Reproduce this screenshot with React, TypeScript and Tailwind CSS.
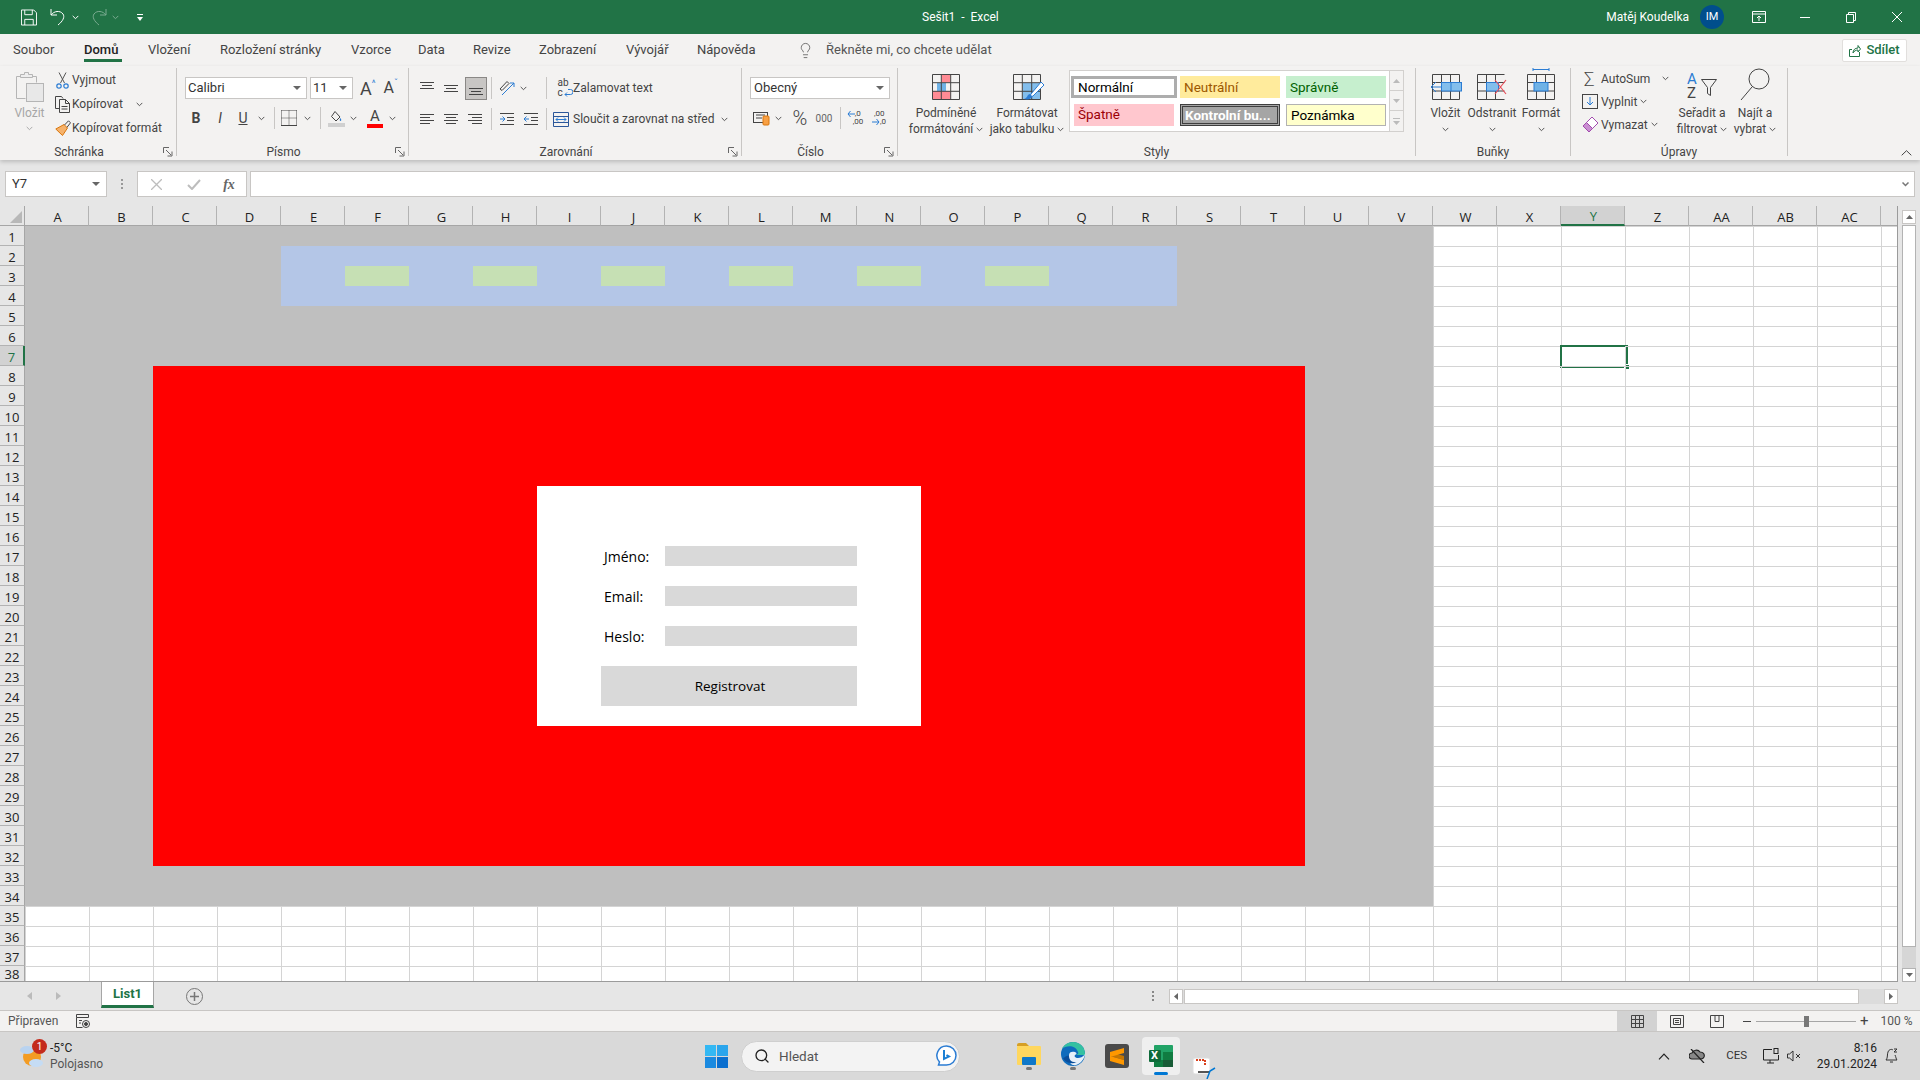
import type { ReactNode } from "react";
import { Search, Lightbulb } from "lucide-react";
import clsx from "clsx";

// --- malé pomocné prvky ---
const Box = ({ className, children }: { className?: string; children?: ReactNode }) => (
  <div className={clsx("flex h-full shrink-0 items-center justify-center", className)}>{children}</div>
);

const Chev = ({ className = "text-[#555]" }: { className?: string }) => (
  <svg width="7" height="5" viewBox="0 0 7 5" className={className} fill="none" stroke="currentColor">
    <path d="M.7.9 3.500 3.700 6.300.9" />
  </svg>
);

const Caret = () => (
  <svg width="8" height="4" viewBox="0 0 8 4" className="text-[#666]" fill="currentColor">
    <path d="M0 0h8L4 4z" />
  </svg>
);

const Sep = () => <div className="h-[22px] w-px bg-[#c8c6c4]" />;

const Launcher = ({ className }: { className: string }) => (
  <svg width="10" height="10" viewBox="0 0 10 10" className={clsx("absolute", className)} fill="none" stroke="#666">
    <path d="M.5 6V.5H6M3 3l5 5M9 4.500v4.500H4.500" />
  </svg>
);

const Grp = ({ label, className, launcher, children }: { label: string; className: string; launcher?: string; children: ReactNode }) => (
  <div className={clsx("relative mt-[2px] flex h-[88px] shrink-0 flex-col border-r border-[#c8c6c4]", className)}>
    <div className="flex h-[76px] shrink-0">{children}</div>
    <div className={clsx("h-[16px] shrink-0 text-center text-[12px] leading-[16px] text-[#444]", launcher && "pr-[18px]")}>{label}</div>
    {launcher && <Launcher className={launcher} />}
  </div>
);

const BigBtn = ({ className, icon, l1, l2 }: { className: string; icon: ReactNode; l1: string; l2?: string }) => (
  <div className={clsx("flex shrink-0 flex-col items-center text-[12px] leading-[16px] text-[#444]", className)}>
    <div className="flex h-[37px] items-center">{icon}</div>
    <div>{l1}</div>
    <div className="flex h-[16px] items-center gap-[3px]">
      {l2 && <span>{l2}</span>}
      <Chev />
    </div>
  </div>
);

// --- ikony ribbonu ---
const PasteIcon = () => (
  <svg width="29" height="30" viewBox="0 0 29 30" fill="none" stroke="#b5b5b5">
    <path d="M5.500 4.500H1.500v22h9M17.500 4.500h4v6" />
    <path d="M5.500 5.500V2.500h4V.5h4v2h4v3z" fill="#eee" />
    <rect x="11.500" y="11.500" width="17" height="18" fill="#e8e8e8" />
  </svg>
);
const ScissorsIcon = () => (
  <svg width="13" height="17" viewBox="0 0 13 17" fill="none">
    <path d="M3 .5 8.500 11M10 .5 4.500 11" stroke="#555" />
    <circle cx="3" cy="14" r="2.200" stroke="#2b7cd3" strokeWidth="1.200" />
    <circle cx="10" cy="14" r="2.200" stroke="#2b7cd3" strokeWidth="1.200" />
  </svg>
);
const CopyIcon = () => (
  <svg width="16" height="17" viewBox="0 0 16 17" fill="none" stroke="#444">
    <path d="M4.500 12.500h-4V.5h6l1.500 2M4.500 3.500h6l4 4v9h-10zM10.500 3.500v4h4M6.500 10.500h6M6.500 13h6" />
  </svg>
);
const BrushIcon = () => (
  <svg width="16" height="17" viewBox="0 0 16 17" fill="none">
    <path d="M9 4.500 12.500 8 7.500 15.500.8 9z" fill="#f6b26b" stroke="#d9760c" />
    <path d="M9.500 5 13.500.8l2 2-3.500 4.500" stroke="#444" />
  </svg>
);
const AlignIcon = ({ v }: { v: "top" | "mid" | "bot" | "l" | "c" | "r" | "in" | "out" }) => {
  const y = v === "top" ? [2, 5, 8] : v === "mid" ? [5, 8, 11] : v === "bot" ? [8, 11, 14] : [];
  if (y.length) {
    return (
      <svg width="16" height="16" viewBox="0 0 16 16" stroke="#444" fill="none">
        <path d={`M1 ${y[0]}.5h14`} />
        <path d={`M3 ${y[1]}.5h10`} />
        <path d={`M1 ${y[2]}.5h14`} />
      </svg>
    );
  }
  if (v === "in" || v === "out") {
    return (
      <svg width="16" height="16" viewBox="0 0 16 16" fill="none">
        <path d="M1 2.500h14M1 13.500h14M8 6.500h7M8 9.500h7" stroke="#444" />
        <path d={v === "in" ? "M6 8H1M3.500 5.500 1 8l2.500 2.500" : "M1 8h5M3.500 5.500 6 8l-2.500 2.500"} stroke="#2b7cd3" />
      </svg>
    );
  }
  const d = v === "l" ? ["M1 3.500h14", "M1 6.500h10", "M1 9.500h14", "M1 12.500h10"] : v === "c" ? ["M1 3.500h14", "M3 6.500h10", "M1 9.500h14", "M3 12.500h10"] : ["M1 3.500h14", "M5 6.500h10", "M1 9.500h14", "M5 12.500h10"];
  return (
    <svg width="16" height="16" viewBox="0 0 16 16" stroke="#444" fill="none">
      {d.map((p) => (
        <path key={p} d={p} />
      ))}
    </svg>
  );
};
const TableBase = ({ children }: { children?: ReactNode }) => (
  <svg width="34" height="28" viewBox="-3 -1 34 28" fill="none" stroke="#444">
    {children}
  </svg>
);

const Ribbon = () => (
  <div className="relative z-10 flex h-[94px] bg-[#f3f2f1] shadow-[0_2px_4px_rgba(0,0,0,0.18)]">
    <Grp label="Schránka" className="w-[177px]" launcher="right-[3px] bottom-[-1px]">
      <div className="ml-[14px] flex w-[31px] flex-col items-center pt-[4px] text-[12px] leading-[16px] text-[#a6a6a6]">
        <PasteIcon />
        <div className="mt-[3px]">Vložit</div>
        <div className="mt-[5px]"><Chev className="text-[#aaa]" /></div>
      </div>
      <div className="ml-[8px] flex flex-col text-[12px] text-[#444]">
        <div className="flex h-[24px] items-center">
          <Box className="w-[19px]"><ScissorsIcon /></Box>
          Vyjmout
        </div>
        <div className="flex h-[24px] items-center">
          <Box className="w-[19px]"><CopyIcon /></Box>
          Kopírovat
          <span className="ml-[13px]"><Chev /></span>
        </div>
        <div className="flex h-[24px] items-center">
          <Box className="w-[19px]"><BrushIcon /></Box>
          Kopírovat formát
        </div>
      </div>
    </Grp>

    <Grp label="Písmo" className="w-[232px]" launcher="right-[3px] bottom-[-1px]">
      <div className="ml-[8px] flex flex-col pt-[9px]">
        <div className="flex h-[22px] items-center text-[13px] text-[#333]">
          <div className="flex h-full w-[122px] items-center justify-between border border-[#c8c6c4] bg-white pr-[5px] pl-[2px]">Calibri<Caret /></div>
          <div className="ml-[3px] flex h-full w-[43px] items-center justify-between border border-[#c8c6c4] bg-white pr-[5px] pl-[2px]">11<Caret /></div>
          <span className="ml-[7px] text-[18px] text-[#444]">A</span><span className="mb-[8px] text-[9px] text-[#2b7cd3]">^</span>
          <span className="ml-[8px] text-[16px] text-[#444]">A</span><span className="mb-[8px] text-[9px] text-[#2b7cd3]">ˇ</span>
        </div>
        <div className="mt-[9px] flex h-[20px] items-center text-[#444]">
          <Box className="w-[22px] text-[14px] font-bold">B</Box>
          <Box className="w-[26px] text-[14px] italic">I</Box>
          <Box className="w-[20px] text-[14px] underline">U</Box>
          <Box className="w-[16px]"><Chev /></Box>
          <Box className="w-[10px]"><Sep /></Box>
          <Box className="w-[20px]">
            <svg width="16" height="16" viewBox="0 0 16 16" fill="none" stroke="#444">
              <path d="M.5.5h15M.5 8h15M8 .5v15M.5.5v15M15.500.5v15" strokeDasharray="1 1" />
              <path d="M0 15.500h16" />
            </svg>
          </Box>
          <Box className="w-[16px]"><Chev /></Box>
          <Box className="w-[10px]"><Sep /></Box>
          <Box className="w-[22px]">
            <svg width="17" height="17" viewBox="0 0 17 17" fill="none">
              <path d="M7 1.500 12 7l-4 4-4.500-4.500z" stroke="#444" />
              <path d="M12.500 8c1 1.500 1 3 0 3s-1-1.500 0-3z" fill="#2b7cd3" />
              <rect y="13" width="17" height="4" fill="#d0d0d0" />
            </svg>
          </Box>
          <Box className="w-[12px]"><Chev /></Box>
          <Box className="ml-[5px] w-[22px]">
            <div className="flex flex-col items-center">
              <span className="text-[15px] leading-[14px]">A</span>
              <div className="mt-[1px] h-[4px] w-[16px] bg-[#ff0000]" />
            </div>
          </Box>
          <Box className="w-[12px]"><Chev /></Box>
        </div>
      </div>
    </Grp>

    <Grp label="Zarovnání" className="w-[333px]" launcher="right-[3px] bottom-[-1px]">
      <div className="ml-[6px] flex flex-col pt-[9px] text-[12px] text-[#444]">
        <div className="flex h-[22px] items-center">
          <Box className="w-[24px]"><AlignIcon v="top" /></Box>
          <Box className="w-[24px]"><AlignIcon v="mid" /></Box>
          <Box className="w-[24px]">
            <div className="ml-[2px] flex h-[23px] w-[22px] items-center justify-center border border-[#8a8886] bg-[#c8c6c4]"><AlignIcon v="bot" /></div>
          </Box>
          <Box className="w-[8px]"><Sep /></Box>
          <Box className="w-[24px]">
            <svg width="17" height="17" viewBox="0 0 17 17" fill="none">
              <path d="M1 9 8 1.500l2 2-7 7z" stroke="#444" />
              <path d="M3 15 15 3M15 3h-4M15 3v4" stroke="#2b7cd3" />
            </svg>
          </Box>
          <Box className="w-[8px]"><Chev /></Box>
          <Box className="ml-[8px] w-[22px]"><Sep /></Box>
          <Box className="w-[16px]">
            <div className="relative h-[20px] w-[15px] text-[10px] leading-[10px] text-[#444]">
              <div>ab</div>
              <div>c</div>
              <svg width="9" height="9" viewBox="0 0 9 9" className="absolute right-0 bottom-0" fill="none" stroke="#2b7cd3"><path d="M4 .5h2.500a2.500 2.500 0 0 1 0 5H1M3 3.500 1 5.500l2 2" /></svg>
            </div>
          </Box>
          <span>Zalamovat text</span>
        </div>
        <div className="mt-[10px] flex h-[20px] items-center">
          <Box className="w-[24px]"><AlignIcon v="l" /></Box>
          <Box className="w-[24px]"><AlignIcon v="c" /></Box>
          <Box className="w-[24px]"><AlignIcon v="r" /></Box>
          <Box className="w-[8px]"><Sep /></Box>
          <Box className="w-[24px]"><AlignIcon v="out" /></Box>
          <Box className="w-[24px]"><AlignIcon v="in" /></Box>
          <Box className="w-[6px]"><Sep /></Box>
          <Box className="w-[24px]">
            <svg width="16" height="15" viewBox="0 0 16 15" fill="none">
              <path d="M.5.5h15v14H.5zM.5 4.500h15M.5 10.500h15" stroke="#2b579a" />
              <path d="M3 7.500h10M5 5.500 3 7.500l2 2M11 5.500l2 2-2 2" stroke="#2b7cd3" />
            </svg>
          </Box>
          <span>Sloučit a zarovnat na střed</span>
          <span className="ml-[6px]"><Chev /></span>
        </div>
      </div>
    </Grp>

    <Grp label="Číslo" className="w-[156px]" launcher="right-[3px] bottom-[-1px]">
      <div className="ml-[8px] flex flex-col pt-[9px] text-[#444]">
        <div className="flex h-[22px] w-[140px] items-center justify-between border border-[#c8c6c4] bg-white pr-[5px] pl-[3px] text-[13px] text-[#333]">Obecný<Caret /></div>
        <div className="mt-[9px] flex h-[20px] items-center">
          <Box className="w-[22px]">
            <svg width="17" height="16" viewBox="0 0 17 16" fill="none">
              <rect x=".5" y="2.500" width="14" height="10" stroke="#444" />
              <path d="M3 5h9M3 8h6" stroke="#444" />
              <rect x="10" y="6" width="6" height="9" rx="1" fill="#f8a044" stroke="#d9760c" />
            </svg>
          </Box>
          <Box className="w-[12px]"><Chev /></Box>
          <Box className="w-[32px] text-[20px] font-light">%</Box>
          <Box className="w-[16px] text-[10px] text-[#666]">000</Box>
          <Box className="w-[16px]"><Sep /></Box>
          <Box className="w-[16px]">
            <span className="relative flex flex-col text-[8px] leading-[8px]">
              <span className="pl-[6px]">,0</span>
              <span className="pl-[4px]">,00</span>
              <svg width="8" height="8" viewBox="0 0 8 8" className="absolute top-0 left-[-2px]" fill="none" stroke="#2b7cd3"><path d="M8 4H1M3.500 1 1 4l2.500 3" /></svg>
            </span>
          </Box>
          <Box className="ml-[7px] w-[16px]">
            <span className="relative flex flex-col text-[8px] leading-[8px]">
              <span className="pl-[2px]">,00</span>
              <span className="pl-[8px]">,0</span>
              <svg width="8" height="8" viewBox="0 0 8 8" className="absolute bottom-0 left-0" fill="none" stroke="#2b7cd3"><path d="M0 4h7M4.500 1 7 4 4.500 7" /></svg>
            </span>
          </Box>
        </div>
      </div>
    </Grp>

    <Grp label="Styly" className="w-[518px]">
      <BigBtn
        className="ml-[9px] w-[78px]"
        l1="Podmíněné"
        l2="formátování"
        icon={
          <TableBase>
            <rect x="9.500" y=".5" width="9" height="8" fill="#ff8b94" stroke="none" />
            <rect x=".5" y="17" width="18" height="8" fill="#ff8b94" stroke="none" />
            <rect x="5" y="9" width="9" height="8" fill="#6fb2e6" stroke="none" />
            <path d="M.5.5h27v25h-27zM.5 8.700h27M.5 17.300h27M9.300.5v25M18.700.5v25" />
          </TableBase>
        }
      />
      <BigBtn
        className="w-[84px]"
        l1="Formátovat"
        l2="jako tabulku"
        icon={
          <TableBase>
            <rect x="9.500" y="9" width="18" height="16" fill="#83beec" stroke="none" />
            <path d="M.5.5h27v25h-27zM.5 8.700h27M.5 17.300h27M9.300.5v25M18.700.5v25" />
            <path d="M28 8 18 20l-2 4 4-2L31 11z" fill="#fff" stroke="#2b7cd3" />
            <path d="M17 20c-3 0-2 4-6 5 4 1 8 0 8-3z" fill="#2b7cd3" stroke="none" />
          </TableBase>
        }
      />
      <div className="mt-[2px] flex h-[62px] w-[321px] border border-[#d2d0ce] bg-white">
        <div className="flex w-[319px] flex-col text-[13.500px] leading-[20px]">
          <div className="mt-[5px] flex h-[22px]">
            <div className="ml-px flex w-[106px] items-center border-[3px] border-[#adadad] pb-[1px] pl-[4px] text-black">Normální</div>
            <div className="ml-[3px] flex w-[100px] items-center bg-[#ffeb9c] pb-[1px] pl-[4px] text-[#9c5700]">Neutrální</div>
            <div className="ml-[6px] flex w-[100px] items-center bg-[#c6efce] pb-[1px] pl-[4px] text-[#006100]">Správně</div>
          </div>
          <div className="mt-[6px] flex h-[22px]">
            <div className="ml-[4px] flex w-[100px] items-center bg-[#ffc7ce] pb-[2px] pl-[4px] text-[#9c0006]">Špatně</div>
            <div className="ml-[6px] flex w-[100px] items-center border-[3px] border-double border-[#3f3f3f] bg-[#a5a5a5] pb-[1px] pl-[2px] font-bold text-white">Kontrolní bu...</div>
            <div className="ml-[6px] flex w-[100px] items-center border border-[#b2b2b2] bg-[#ffffcc] pb-[1px] pl-[4px] text-black">Poznámka</div>
          </div>
        </div>
      </div>
      <div className="mt-[2px] flex h-[62px] w-[14px] flex-col border-y border-r border-[#d2d0ce] text-[#aaa]">
        <Box className="!h-[20px] border-b border-[#d2d0ce]"><svg width="7" height="4" viewBox="0 0 7 4" fill="#bbb"><path d="M3.500 0 7 4H0z" /></svg></Box>
        <Box className="!h-[20px] border-b border-[#d2d0ce]"><svg width="7" height="4" viewBox="0 0 7 4" fill="#bbb"><path d="M0 0h7L3.500 4z" /></svg></Box>
        <Box className="!h-[20px]"><svg width="7" height="7" viewBox="0 0 7 7" fill="#bbb"><path d="M0 0h7v1H0zM0 3h7L3.500 7z" /></svg></Box>
      </div>
    </Grp>

    <Grp label="Buňky" className="w-[155px]">
      <BigBtn
        className="ml-[8px] w-[43px]"
        l1="Vložit"
        icon={
          <svg width="32" height="26" viewBox="0 0 32 26" fill="none" stroke="#444">
            <path d="M2.500.5h27v25h-27zM2.500 8.500h27M2.500 17h27M11.500.5v25M20.500.5v25" />
            <rect x="11.500" y="8.500" width="20" height="8.500" fill="#83beec" stroke="#2b7cd3" />
            <path d="M21 8.500V17" stroke="#2b7cd3" />
            <path d="M12 13H1M6 8l-5 5 5 5" stroke="#2b7cd3" />
          </svg>
        }
      />
      <BigBtn
        className="w-[50px]"
        l1="Odstranit"
        icon={
          <svg width="30" height="26" viewBox="0 0 30 26" fill="none" stroke="#444">
            <path d="M.5.5h27M.5 8.500h27M.5 17h27M.5 25.500h27M.5.5v25M9.500.5v25M18.500.5v25" />
            <rect x="9.500" y="8.500" width="12" height="8.500" fill="#83beec" stroke="#2b7cd3" />
            <path d="M18 6l11 14M29 6 18 20" stroke="#e8505b" strokeWidth="1.200" />
          </svg>
        }
      />
      <BigBtn
        className="w-[48px]"
        l1="Formát"
        icon={
          <svg width="28" height="32" viewBox="0 0 28 32" fill="none" stroke="#444" className="mt-[-6px]">
            <path d="M6 1.500h16M6 0v3M22 0v3" stroke="#2b7cd3" />
            <path d="M.5 6.500h27v25H.500zM.5 14.500h27M.5 23h27M9.500 6.500v25M18.500 6.500v25" />
            <rect x="7" y="14.500" width="14" height="8.500" fill="#6fb2e6" stroke="#2b7cd3" />
          </svg>
        }
      />
    </Grp>

    <Grp label="Úpravy" className="w-[217px]">
      <div className="mt-[-1px] ml-[11px] flex w-[93px] shrink-0 flex-col text-[12px] text-[#444]">
        <div className="flex h-[23px] items-center">
          <Box className="w-[19px] justify-start pl-[2px] text-[17px] font-light">∑</Box>
          AutoSum
          <span className="ml-[12px]"><Chev /></span>
        </div>
        <div className="flex h-[23px] items-center">
          <Box className="w-[19px] justify-start">
            <svg width="16" height="15" viewBox="0 0 16 15" fill="none">
              <rect x=".5" y=".5" width="15" height="14" stroke="#444" />
              <path d="M8 3v8M5 8l3 3 3-3" stroke="#2b7cd3" />
            </svg>
          </Box>
          Vyplnit
          <span className="ml-[3px]"><Chev /></span>
        </div>
        <div className="flex h-[23px] items-center">
          <Box className="w-[19px] justify-start">
            <svg width="17" height="17" viewBox="0 0 17 17" fill="none" stroke="#a24bae">
              <path d="M1 10 10 1l6 6-9 9z" fill="#c98fd1" />
              <path d="m4.500 6.500 6 6" />
              <path d="M10 1l6 6-5.500 5.500-6-6z" fill="#fff" />
            </svg>
          </Box>
          Vymazat
          <span className="ml-[3px]"><Chev /></span>
        </div>
      </div>
      <BigBtn
        className="w-[54px]"
        l1="Seřadit a"
        l2="filtrovat"
        icon={
          <div className="relative h-[30px] w-[30px] text-[15px] leading-[14px]">
            <span className="block text-[#2b7cd3]">A</span>
            <span className="block text-[#444]">Z</span>
            <svg width="16" height="18" viewBox="0 0 16 18" className="absolute top-[7px] right-0" fill="none" stroke="#444"><path d="M.5.5h15l-6 8v8l-3-2v-6z" /></svg>
          </div>
        }
      />
      <BigBtn
        className="ml-[4px] w-[44px]"
        l1="Najít a"
        l2="vybrat"
        icon={
          <svg width="30" height="36" viewBox="0 0 30 36" fill="none" stroke="#444" className="mt-[-4px]">
            <circle cx="19" cy="12" r="10" />
            <path d="M12 20 1 33" />
          </svg>
        }
      />
    </Grp>
    <div className="flex flex-1 items-end justify-end pr-[8px] pb-[4px]">
      <svg width="11" height="6" viewBox="0 0 11 6" fill="none" stroke="#444"><path d="M.7 5.300 5.500.7l4.800 4.600" /></svg>
    </div>
  </div>
);

const TitleBar = () => (
  <div className="flex h-[34px] items-center bg-[#217346] text-[12px] text-white">
    <div className="flex w-[922px] shrink-0 items-center">
      <Box className="ml-[21px] w-[16px]">
        <svg width="17" height="17" viewBox="0 0 17 17" fill="none" stroke="#fff"><path d="M.5.5h13l3 3v13H.5zM4 .5v5h8v-5M4 16.500v-6h9v6" /></svg>
      </Box>
      <Box className="ml-[13px] w-[16px]">
        <svg width="16" height="18" viewBox="0 0 16 18" fill="none" stroke="#fff"><path d="M1 1v6h6M1 7c3-4 9-5 12-1 2 3 0 7-5 11" /></svg>
      </Box>
      <Box className="ml-[5px] w-[8px]"><Chev className="text-white" /></Box>
      <Box className="ml-[12px] w-[16px] opacity-40">
        <svg width="16" height="18" viewBox="0 0 16 18" fill="none" stroke="#fff"><path d="M15 1v6H9M15 7C12 3 6 2 3 6c-2 3 0 7 5 11" /></svg>
      </Box>
      <Box className="ml-[4px] w-[8px] opacity-40"><Chev className="text-white" /></Box>
      <Box className="ml-[18px] w-[6px]">
        <svg width="6" height="7" viewBox="0 0 6 7" fill="#fff"><path d="M0 0h6v1H0zM0 3h6L3 7z" /></svg>
      </Box>
    </div>
    <div>Sešit1 &nbsp;-&nbsp; Excel</div>
    <div className="flex flex-1 items-center justify-end">
      <span>Matěj Koudelka</span>
      <div className="mr-[11px] ml-[11px] flex h-[24px] w-[24px] items-center justify-center rounded-full bg-[#004e8c] text-[11px]">IM</div>
      <Box className="w-[47px]">
        <svg width="14" height="12" viewBox="0 0 14 12" fill="none" stroke="#fff"><path d="M.5.5h13v11H.5zM.5 3h13M7 10V5M5 7l2-2 2 2" /></svg>
      </Box>
      <Box className="w-[46px]"><div className="h-px w-[10px] bg-white" /></Box>
      <Box className="w-[46px]">
        <svg width="10" height="11" viewBox="0 0 10 11" fill="none" stroke="#fff"><path d="M.5 2.500h7v8h-7zM2.500 2.500V.5h7v8h-2" /></svg>
      </Box>
      <Box className="w-[46px]">
        <svg width="10" height="10" viewBox="0 0 10 10" fill="none" stroke="#fff"><path d="M0 0l10 10M10 0 0 10" /></svg>
      </Box>
    </div>
  </div>
);

const TABS = [
  { label: "Soubor", cls: "w-[71px]" },
  { label: "Domů", cls: "w-[64px] font-medium text-[#222]" },
  { label: "Vložení", cls: "w-[72px]" },
  { label: "Rozložení stránky", cls: "w-[131px]" },
  { label: "Vzorce", cls: "w-[67px]" },
  { label: "Data", cls: "w-[55px]" },
  { label: "Revize", cls: "w-[66px]" },
  { label: "Zobrazení", cls: "w-[87px]" },
  { label: "Vývojář", cls: "w-[71px]" },
  { label: "Nápověda", cls: "w-[100px]" },
];

const TabRow = () => (
  <div className="flex h-[32px] items-center bg-[#f3f2f1] pl-[13px] text-[13px] text-[#444]">
    {TABS.map((t) => (
      <div key={t.label} className={clsx("relative flex h-full shrink-0 items-center", t.cls)}>
        {t.label}
        {t.label === "Domů" && <div className="absolute top-[25px] left-0 h-[3px] w-[38px] bg-[#217346]" />}
      </div>
    ))}
    <Lightbulb size={17} strokeWidth={1} className="text-[#444]" />
    <span className="ml-[12px] text-[#555]">Řekněte mi, co chcete udělat</span>
    <div className="flex flex-1 justify-end pr-[13px]">
      <div className="flex h-[23px] w-[65px] items-center justify-center gap-[5px] rounded-[2px] border border-[#e1dfdd] bg-white font-medium text-[#217346]">
        <svg width="12" height="13" viewBox="0 0 12 13" fill="none" stroke="#217346"><path d="M3 5.500H.5v7h10V8M4 9c0-3 2-5 5-5V1.500L11.500 5 9 8V6C7 6 5 7 4 9z" /></svg>
        Sdílet
      </div>
    </div>
  </div>
);

const FormulaBar = () => (
  <div className="flex h-[46px] bg-[#e6e6e6] pt-[11px]">
    <div className="ml-[5px] flex h-[26px] w-[102px] items-center justify-between border border-[#c8c6c4] bg-white pr-[6px] pl-[6px] text-[13px] text-[#333]">
      Y7
      <Caret />
    </div>
    <Box className="!h-[26px] w-[30px]">
      <div className="flex flex-col gap-[2px]">
        <div className="h-[2px] w-[2px] bg-[#999]" />
        <div className="h-[2px] w-[2px] bg-[#999]" />
        <div className="h-[2px] w-[2px] bg-[#999]" />
      </div>
    </Box>
    <div className="flex h-[26px] w-[110px] items-center border border-[#c8c6c4] bg-white">
      <Box className="w-[37px] text-[#bbb]">
        <svg width="11" height="11" viewBox="0 0 11 11" fill="none" stroke="#bdbdbd" strokeWidth="1.300"><path d="M0 0l11 11M11 0 0 11" /></svg>
      </Box>
      <Box className="w-[37px]">
        <svg width="14" height="11" viewBox="0 0 14 11" fill="none" stroke="#bdbdbd" strokeWidth="2"><path d="M1 6l4 4 8-9" /></svg>
      </Box>
      <Box className="w-[34px] font-['Liberation_Serif',serif] text-[14px] font-bold text-[#666] italic">fx</Box>
    </div>
    <div className="ml-[3px] flex h-[26px] w-[1665px] items-center justify-end border border-[#c8c6c4] bg-white pr-[5px]">
      <svg width="7" height="5" viewBox="0 0 7 5" fill="none" stroke="#777" strokeWidth="1.500"><path d="M.5.5 3.500 3.500 6.500.5" /></svg>
    </div>
  </div>
);

const COLS = ["A","B","C","D","E","F","G","H","I","J","K","L","M","N","O","P","Q","R","S","T","U","V","W","X","Y","Z","AA","AB","AC",""];
const ROWS = Array.from({ length: 38 }, (_, i) => i + 1);

// pole listu: barva výplně podle buňky (řádek od 1, sloupec od 0)
const fillOf = (r: number, c: number) => {
  if (c >= 10 && c <= 12 && (r === 17 || r === 19 || r === 21)) return "bg-[#d9d9d9]";
  if (c >= 9 && c <= 12 && (r === 23 || r === 24)) return "bg-[#d9d9d9]";
  if (c >= 8 && c <= 13 && r >= 14 && r <= 25) return "bg-white";
  if (c >= 2 && c <= 19 && r >= 8 && r <= 32) return "bg-[#ff0000]";
  if (r === 3 && [5, 7, 9, 11, 13, 15].includes(c)) return "bg-[#c6e0b4]";
  if (c >= 4 && c <= 17 && r >= 2 && r <= 4) return "bg-[#b4c6e7]";
  if (c <= 21 && r <= 34) return "bg-[#bfbfbf]";
  return "border-l border-t border-[#d4d4d4]";
};

const LABELS: Record<string, string> = { "17-9": "Jméno:", "19-9": "Email:", "21-9": "Heslo:" };

const Sheet = () => (
  <div className="grid w-[1898px] grid-cols-[25px_repeat(29,64px)_17px] grid-rows-[20px_repeat(37,20px)_16px] overflow-hidden border-r border-b border-[#9b9b9b] bg-white font-['Open_Sans',sans-serif] text-[13px] leading-none text-[#222]">
    <div className="relative border-r border-b border-[#a6a6a6] bg-[#e6e6e6]">
      <svg width="12" height="12" viewBox="0 0 12 12" className="absolute right-[2px] bottom-[2px]" fill="#b8b8b8"><path d="M12 0v12H0z" /></svg>
    </div>
    {COLS.map((name, i) => (
      <div
        key={i}
        className={clsx(
          "flex items-center justify-center pt-[3px] pl-[2px]",
          i < 29 && "border-r border-[#b3b3b3]",
          name === "Y" ? "border-b-2 border-b-[#217346] bg-[#d2d2d2] text-[#217346]" : "border-b border-b-[#a6a6a6] bg-[#e6e6e6]"
        )}
      >
        {name}
      </div>
    ))}
    {ROWS.map((r) => (
      <div key={r} className="contents">
        <div
          className={clsx(
            "flex items-start justify-center border-b border-[#b3b3b3] text-[13px]",
            r === 38 ? "pt-[2px]" : "pt-[5px]",
            r === 7 ? "border-r-2 border-r-[#217346] bg-[#d2d2d2] text-[#217346]" : "border-r border-r-[#a6a6a6] bg-[#e6e6e6]"
          )}
        >
          {r}
        </div>
        {COLS.map((_, c) => {
          if (r === 23 && c === 9) {
            return (
              <div key={c} className="col-span-4 row-span-2 flex items-center justify-center bg-[#d9d9d9] pt-[2px] pl-[2px] text-[13.500px] text-black">
                Registrovat
              </div>
            );
          }
          if ((r === 23 || r === 24) && c >= 9 && c <= 12) return null;
          return (
            <div key={c} className={clsx("relative flex items-end pb-[2px] pl-[3px] text-[14px] whitespace-nowrap text-black", fillOf(r, c))}>
              {LABELS[`${r}-${c}`]}
              {r === 7 && c === 24 && (
                <div className="absolute top-[-2px] left-[-2px] h-[23px] w-[68px] border-2 border-[#217346]">
                  <div className="absolute right-[-4px] bottom-[-4px] h-[6px] w-[6px] border border-white bg-[#217346]" />
                </div>
              )}
            </div>
          );
        })}
      </div>
    ))}
  </div>
);

const VScroll = () => (
  <div className="flex flex-1 flex-col bg-[#e6e6e6] pt-[4px] pl-[4px]">
    <div className="flex h-[14px] w-[14px] shrink-0 items-center justify-center border border-[#c8c6c4] bg-white">
      <svg width="7" height="4" viewBox="0 0 7 4" fill="#666"><path d="M3.500 0 7 4H0z" /></svg>
    </div>
    <div className="mt-px h-[722px] w-[14px] shrink-0 border border-[#b3b3b3] bg-white" />
    <div className="w-[14px] flex-1 bg-[#d6d6d6]" />
    <div className="flex h-[14px] w-[14px] shrink-0 items-center justify-center border border-[#b3b3b3] bg-white">
      <svg width="7" height="4" viewBox="0 0 7 4" fill="#666"><path d="M0 0h7L3.500 4z" /></svg>
    </div>
  </div>
);

const SheetTabs = () => (
  <div className="flex h-[28px] items-start bg-[#e6e6e6]">
    <Box className="ml-[25px] w-[8px]">
      <svg width="5" height="8" viewBox="0 0 5 8" fill="#bbb"><path d="M5 0v8L0 4z" /></svg>
    </Box>
    <Box className="ml-[21px] w-[8px]">
      <svg width="5" height="8" viewBox="0 0 5 8" fill="#bbb"><path d="M0 0v8l5-4z" /></svg>
    </Box>
    <div className="ml-[39px] flex h-[26px] w-[53px] items-center justify-center border-x border-[#a6a6a6] border-b-[3px] border-b-[#217346] bg-white text-[13px] font-bold text-[#217346]">
      List1
    </div>
    <Box className="ml-[32px] w-[17px]">
      <svg width="17" height="17" viewBox="0 0 17 17" fill="none" stroke="#777"><circle cx="8.500" cy="8.500" r="8" /><path d="M4 8.500h9M8.500 4v9" strokeWidth="1.500" /></svg>
    </Box>
    <Box className="ml-[941px] w-[17px]">
      <div className="flex flex-col gap-[2px]">
        <div className="h-[2px] w-[2px] bg-[#888]" />
        <div className="h-[2px] w-[2px] bg-[#888]" />
        <div className="h-[2px] w-[2px] bg-[#888]" />
      </div>
    </Box>
    <div className="mt-[7px] ml-[8px] flex h-[15px] w-[729px] bg-[#dcdcdc]">
      <Box className="w-[14px] border border-[#c8c6c4] bg-white">
        <svg width="4" height="7" viewBox="0 0 4 7" fill="#666"><path d="M4 0v7L0 3.500z" /></svg>
      </Box>
      <div className="ml-px w-[675px] border border-[#c8c6c4] bg-white" />
      <Box className="ml-auto w-[14px] border border-[#c8c6c4] bg-white">
        <svg width="4" height="7" viewBox="0 0 4 7" fill="#666"><path d="M0 0v7l4-3.500z" /></svg>
      </Box>
    </div>
  </div>
);

const StatusBar = () => (
  <div className="flex h-[22px] items-center border-y border-[#c8c6c4] bg-[#f3f2f1] text-[12px] text-[#555]">
    <span className="ml-[8px] w-[68px]">Připraven</span>
    <svg width="14" height="14" viewBox="0 0 14 14" fill="none" stroke="#444">
      <path d="M.5.5h12v3H.5zM.5 3.500v10h6M3 6.500h3M3 9h2" />
      <circle cx="10" cy="10" r="3.500" />
      <circle cx="10" cy="10" r="1.500" fill="#444" />
    </svg>
    <Box className="ml-[1527px] w-[40px] bg-[#d2d2d2]">
      <svg width="13" height="13" viewBox="0 0 13 13" fill="none" stroke="#444"><path d="M.5.5h12v12H.5zM.5 4.500h12M.5 8.500h12M4.500.5v12M8.500.5v12" /></svg>
    </Box>
    <Box className="w-[40px]">
      <svg width="14" height="13" viewBox="0 0 14 13" fill="none" stroke="#444"><path d="M.5.5h13v12H.5zM3.500 3.500h7v6h-7zM5 5.500h4M5 7.500h4" /></svg>
    </Box>
    <Box className="w-[40px]">
      <svg width="14" height="13" viewBox="0 0 14 13" fill="none" stroke="#444"><path d="M.5.5h13v12H.5zM5 .5v6h4v-6" /></svg>
    </Box>
    <div className="ml-[6px] h-px w-[8px] bg-[#444]" />
    <div className="relative ml-[5px] h-px w-[100px] bg-[#a6a6a6]">
      <div className="absolute top-[-5px] left-[48px] h-[11px] w-[5px] bg-[#777]" />
    </div>
    <div className="ml-[4px] text-[15px] leading-none text-[#444]">+</div>
    <span className="ml-[12px]">100 %</span>
  </div>
);

const Taskbar = () => (
  <div className="flex h-[48px] items-center bg-[#d9d9d9] text-[#333]">
    <div className="relative ml-[20px] h-[24px] w-[24px]">
      <svg width="24" height="24" viewBox="0 0 24 24">
        <circle cx="12" cy="13" r="9" fill="#f39c24" />
        <ellipse cx="7" cy="6" rx="7" ry="4" fill="#b9d3f0" />
        <ellipse cx="16" cy="19" rx="7" ry="4" fill="#c5dcf4" />
      </svg>
      <div className="absolute top-[-5px] right-[-3px] flex h-[15px] w-[15px] items-center justify-center rounded-full bg-[#c42b1c] text-[10px] text-white">1</div>
    </div>
    <div className="ml-[6px] flex w-[660px] shrink-0 flex-col text-[12px] leading-[16px]">
      <span className="text-[#222]">-5°C</span>
      <span className="text-[#555]">Polojasno</span>
    </div>
    {/* Start */}
    <div className="ml-[-5px] grid h-[23px] w-[23px] grid-cols-2 gap-[1px]">
      <div className="bg-[#33b8f3]" />
      <div className="bg-[#2ba5ec]" />
      <div className="bg-[#1a8ae0]" />
      <div className="bg-[#0b6fcf]" />
    </div>
    <div className="ml-[13px] flex h-[31px] w-[219px] items-center rounded-full border border-[#cfcfcf] bg-[#f3f3f3]">
      <Search size={16} strokeWidth={2} className="ml-[12px] text-[#222]" />
      <span className="ml-[9px] text-[13.500px] text-[#555]">Hledat</span>
      <svg width="21" height="22" viewBox="0 0 21 22" className="ml-[118px]" fill="none">
        <path d="M10.500 1a9.500 9.500 0 0 1 0 19H2.500l1-3a9.500 9.500 0 0 1 7-16z" fill="#fff" stroke="#2b7cd3" strokeWidth="1.500" />
        <path d="M8 5v9l5-2.500-2.500-1.500" stroke="#1a7fd4" strokeWidth="2" />
      </svg>
    </div>
    <div className="ml-[57px] flex h-[38px] w-[24px] flex-col items-center justify-center">
      <svg width="24" height="22" viewBox="0 0 24 22">
        <path d="M0 2a2 2 0 0 1 2-2h7l3 3H0z" fill="#d69f25" />
        <rect y="3" width="24" height="19" rx="1" fill="#ffd75e" />
        <rect x="5" y="14" width="14" height="8" rx="1" fill="#0f78c9" />
      </svg>
      <div className="mt-[2px] h-[3px] w-[6px] rounded-full bg-[#777]" />
    </div>
    <div className="ml-[20px] flex h-[38px] w-[24px] flex-col items-center justify-center">
      <svg width="24" height="24" viewBox="0 0 24 24">
        <circle cx="12" cy="12" r="12" fill="#0f6cbd" />
        <path d="M24 12C24 5 19 0 12 0 7 0 3 3 1 7c3-3 13-5 16 3 1 2-1 3-3 3h10z" fill="#35c1a1" />
        <path d="M8 13c0-3 3-4 6-3 2 1 2 2 0 3-1 1 0 3 3 3 2 0 5-1 7-4-1 7-7 12-12 11-4-1-4-6-4-10z" fill="#fff" opacity="0.9" />
        <path d="M8 14c0 4 3 7 8 6-6 3-12 0-14-4 1 0 5-4 6-2z" fill="#0a4e9b" />
      </svg>
      <div className="mt-[1px] h-[3px] w-[6px] rounded-full bg-[#777]" />
    </div>
    <div className="ml-[20px] flex h-[24px] w-[24px] items-center justify-center rounded-[3px] bg-[#4a4a4a]">
      <svg width="14" height="17" viewBox="0 0 14 17" fill="#ff9800">
        <path d="M0 4 14 8v4L0 8z" fill="#c77700" />
        <path d="M14 0v5L0 9V4zM0 8l14 4v5L0 13z" />
      </svg>
    </div>
    <div className="relative ml-[13px] flex h-[38px] w-[38px] items-center justify-center rounded-[4px] bg-[#efefef]">
      <svg width="24" height="22" viewBox="0 0 24 22">
        <rect x="5" width="19" height="22" rx="1" fill="#21a366" />
        <rect x="14" y="7" width="10" height="8" fill="#107c41" />
        <rect x="14" y="15" width="10" height="7" fill="#185c37" />
        <rect x="5" y="15" width="9" height="7" fill="#107c41" />
        <rect x="0" y="5" width="12" height="12" rx="1" fill="#0f6b3a" />
      </svg>
      <span className="absolute top-[12px] left-[9px] text-[11px] leading-[14px] font-bold text-white">X</span>
      <div className="absolute bottom-0 left-[12px] h-[3px] w-[14px] rounded-full bg-[#0078d4]" />
    </div>
    <div className="mt-[24px] ml-[12px] h-[22px] w-[24px]">
      <svg width="24" height="22" viewBox="0 0 24 22" fill="none">
        <rect x="1" y="1" width="17" height="16" rx="2" fill="#fff" stroke="#ddd" />
        <path d="M4 3h9v6" stroke="#d9411e" strokeWidth="2" strokeDasharray="2 1" />
        <path d="M6 15h12" stroke="#555" strokeWidth="2" />
        <path d="M15 22l3-8 5-3" stroke="#0078d4" strokeWidth="1.500" />
      </svg>
    </div>
    <div className="flex flex-1 items-center justify-end">
      <svg width="12" height="7" viewBox="0 0 12 7" fill="none" stroke="#222" strokeWidth="1.200"><path d="M1 6.300 6 1l5 5.300" /></svg>
      <svg width="16" height="14" viewBox="0 0 16 14" className="ml-[19px]" fill="none" stroke="#222" strokeWidth="1.200">
        <path d="M3 10a3 3 0 0 1 0-6c1-3 6-4 8-1 3 0 5 2 4 5-1 2-2 2-3 2z" fill="#888" />
        <path d="M2 0l13 14" />
      </svg>
      <span className="ml-[21px] text-[11.500px] text-[#333]">CES</span>
      <svg width="16" height="17" viewBox="0 0 16 17" className="ml-[16px]" fill="none" stroke="#222"><path d="M9 1.500H.5V12h15V7M4 15h7M7 12v3" /><rect x="11" y=".5" width="4" height="5" /></svg>
      <svg width="15" height="12" viewBox="0 0 15 12" className="ml-[8px]" fill="none" stroke="#333"><path d="M.5 4v4h2l3.500 3V1L2.500 4zM9 4l4 4M13 4 9 8" /></svg>
      <div className="ml-[17px] flex w-[58px] flex-col items-end text-[12px] leading-[16px] text-[#222]">
        <span>8:16</span>
        <span>29.01.2024</span>
      </div>
      <svg width="14" height="16" viewBox="0 0 14 16" className="mr-[21px] ml-[8px]" fill="none" stroke="#333"><path d="M1 12c2-2 1-6 2-8 1-3 4-3 5-2M1 12h11c-1-1-1-3-2-5M5 14h3" /><path d="M9 1h3l-3 3h3" /></svg>
    </div>
  </div>
);

export default function App() {
  return (
    <div className="flex h-[1080px] w-[1920px] flex-col overflow-hidden bg-[#e6e6e6] font-['Roboto',sans-serif]">
      <TitleBar />
      <TabRow />
      <Ribbon />
      <FormulaBar />
      <div className="flex h-[776px]">
        <Sheet />
        <VScroll />
      </div>
      <SheetTabs />
      <StatusBar />
      <Taskbar />
    </div>
  );
}
